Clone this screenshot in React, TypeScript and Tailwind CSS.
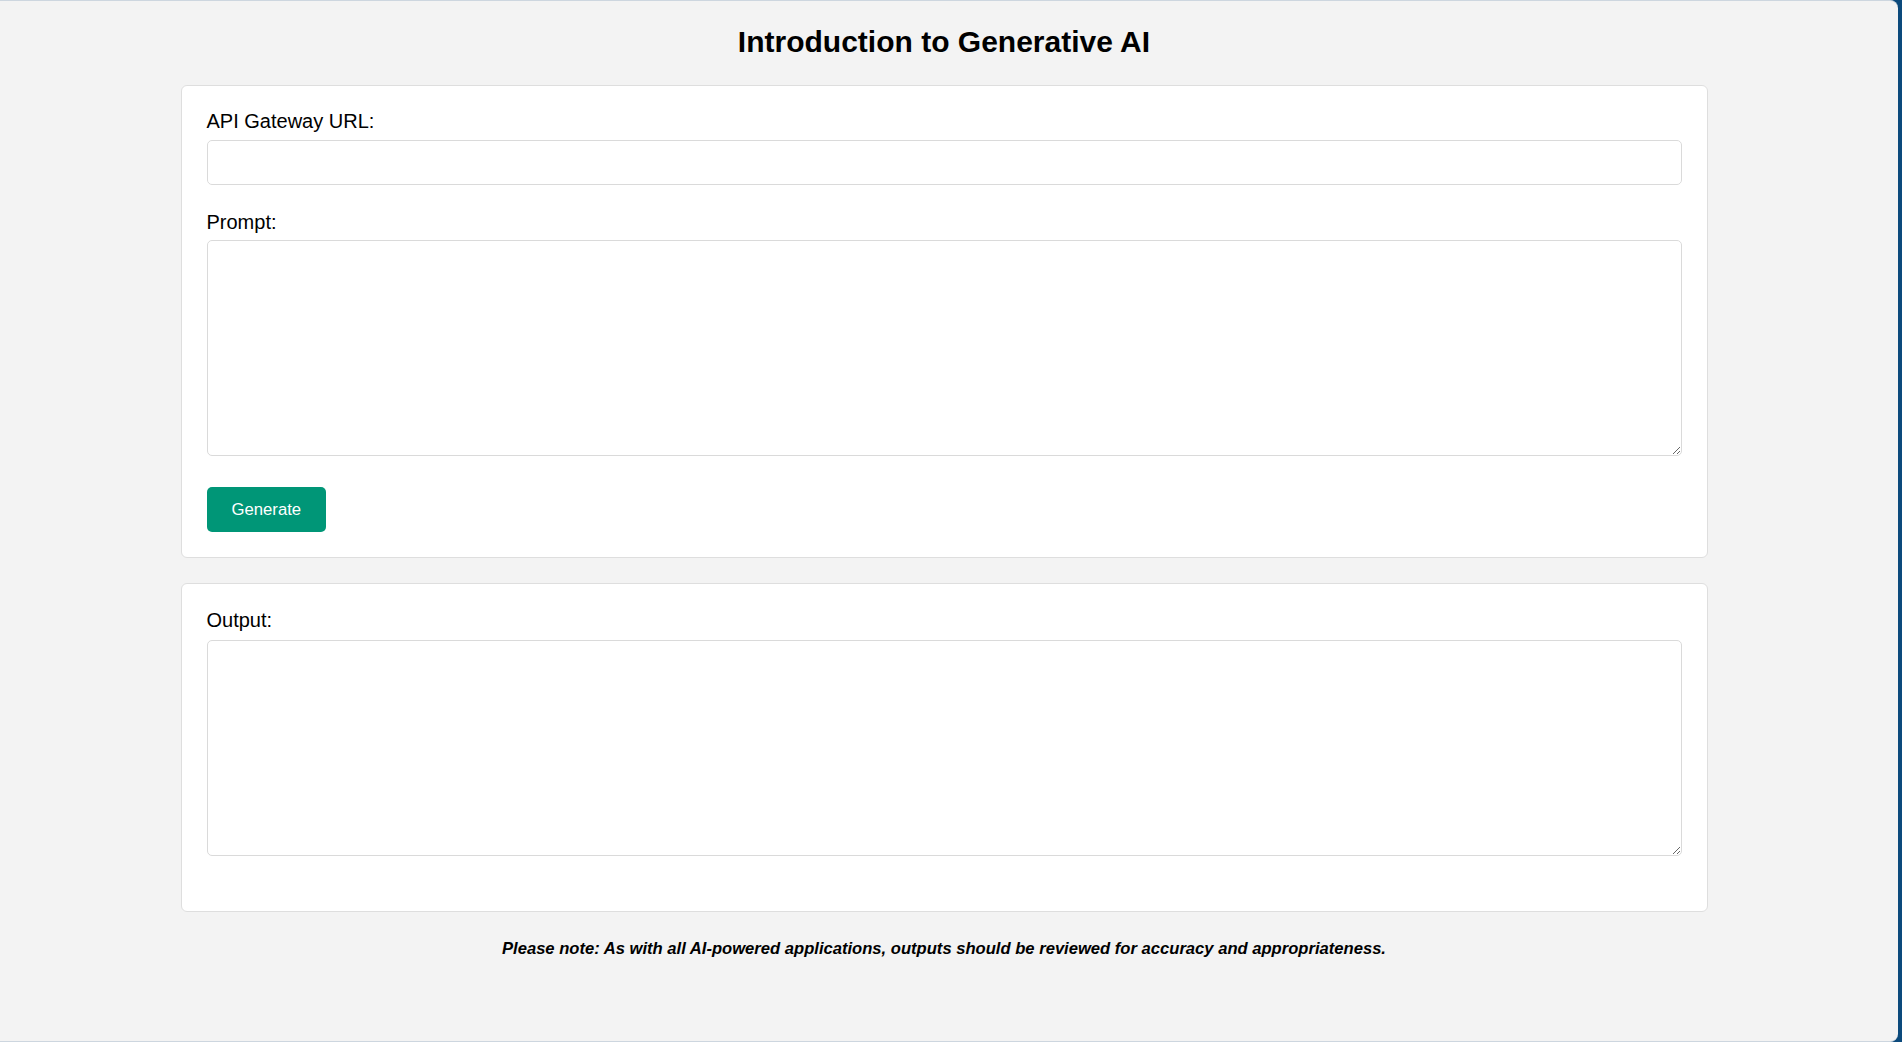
export default function App() {
  return (
    <div className="flex h-[1042px] w-[1902px] bg-[#0c4a7c] font-['Liberation_Sans',Arial,sans-serif] text-black">
      {/* Browser viewport */}
      <div className="h-full w-[1898px] overflow-hidden rounded-r-[8px] border-y border-[#cdd6df] bg-[#f3f3f3]">
        <div className="w-[1888px]">
          <h1 className="pt-[24px] mb-[26px] text-center text-[30px] font-bold leading-[34px]">
            Introduction to Generative AI
          </h1>

          {/* Input card */}
          <div className="mx-auto w-[1527px] rounded-[6px] border border-[#dedede] bg-white px-[25px] pt-[24px] pb-[25px]">
            <label className="mb-[7px] block text-[20px] leading-[23px]">API Gateway URL:</label>
            <input
              type="text"
              className="mb-[26px] block h-[45px] w-full rounded-[5px] border border-[#dadada] bg-white px-[12px] text-[16.7px] outline-none"
            />
            <label className="mb-[6px] block text-[20px] leading-[23px]">Prompt:</label>
            <textarea className="mb-[31px] block h-[216px] w-full rounded-[5px] border border-[#dadada] bg-white p-[12px] text-[16.7px] outline-none" />
            <button className="block h-[45px] rounded-[5px] bg-[#009677] px-[25px] text-[16.7px] leading-[19px] text-white">
              Generate
            </button>
          </div>

          {/* Output card */}
          <div className="mx-auto mt-[25px] w-[1527px] rounded-[6px] border border-[#dedede] bg-white px-[25px] pt-[25px] pb-[55px]">
            <label className="mb-[8px] block text-[20px] leading-[23px]">Output:</label>
            <textarea
              readOnly
              className="block h-[216px] w-full rounded-[5px] border border-[#dadada] bg-white p-[12px] text-[16.7px] outline-none"
            />
          </div>

          <p className="mt-[27px] text-center text-[16.6px] font-bold italic leading-[19px]">
            Please note: As with all AI-powered applications, outputs should be reviewed for accuracy and appropriateness.
          </p>
        </div>
      </div>
    </div>
  );
}
